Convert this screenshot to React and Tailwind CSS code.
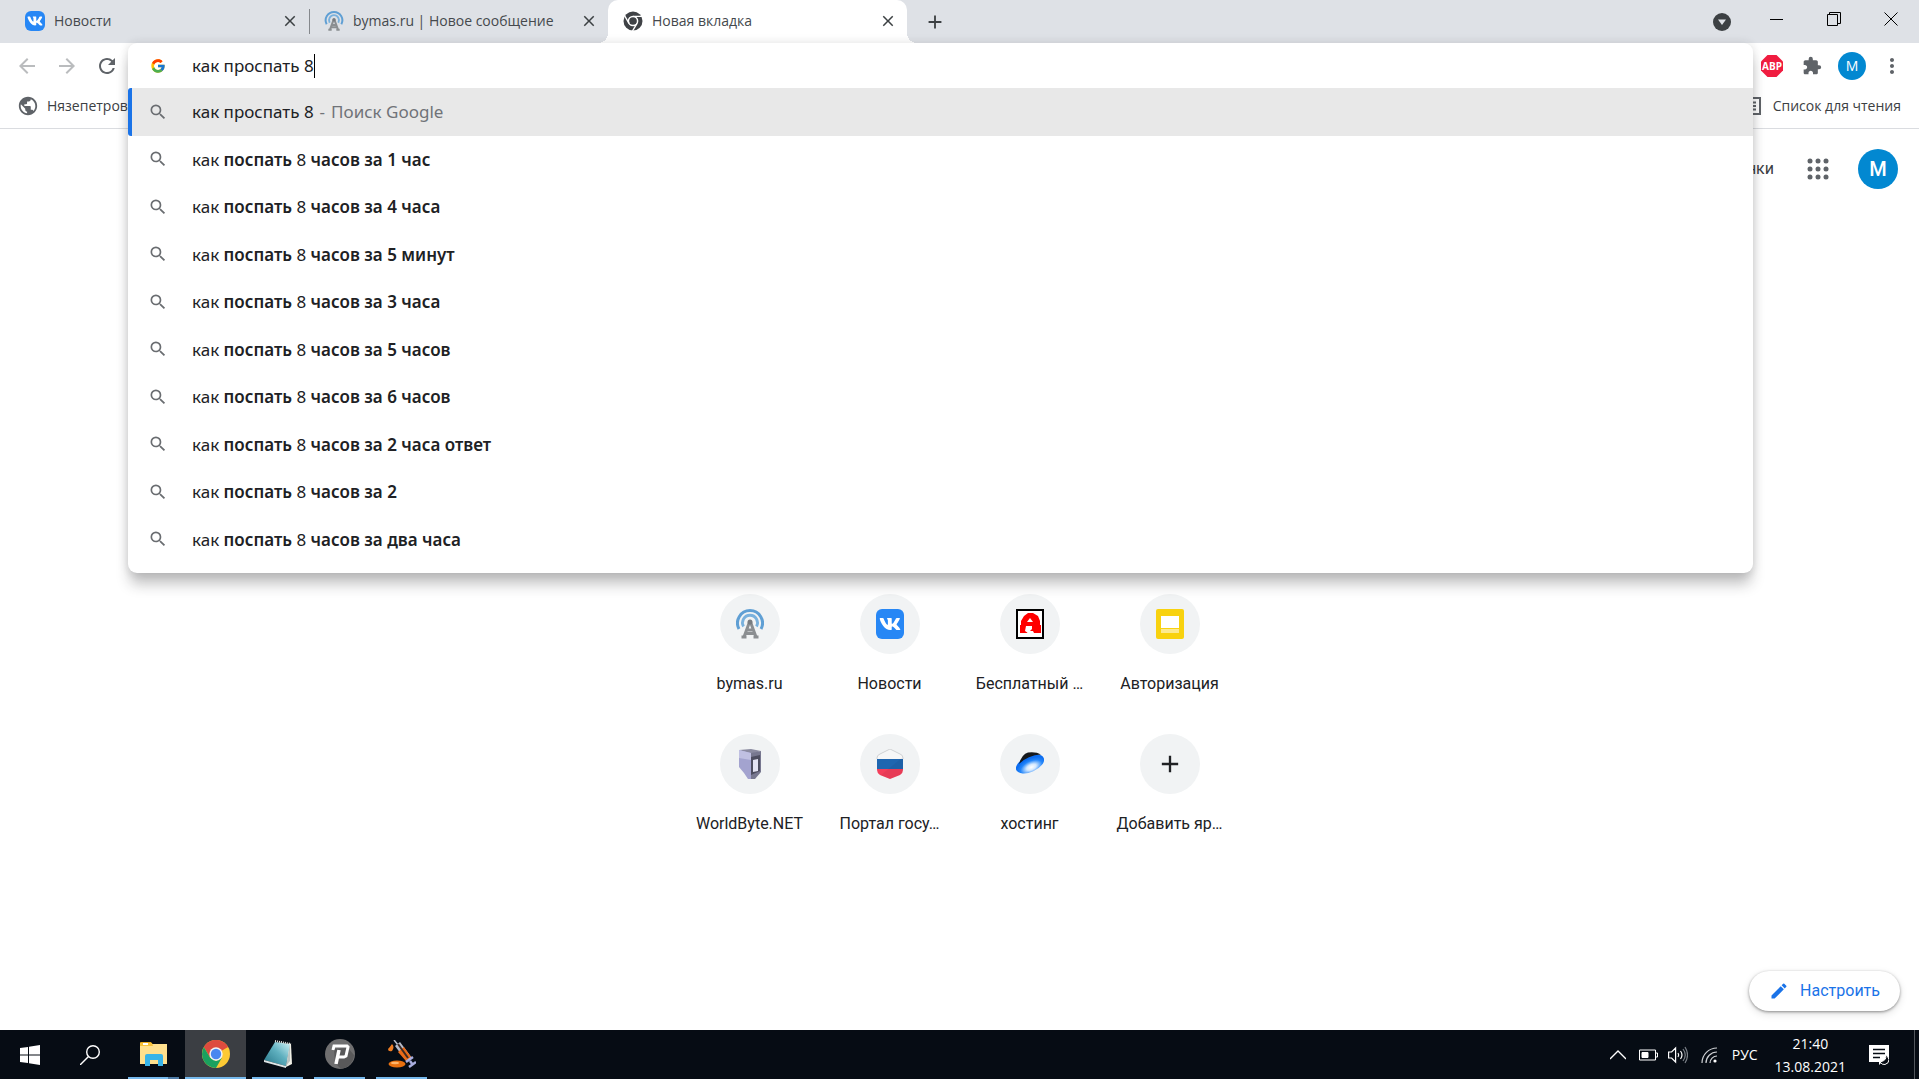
import { useState } from 'react'
import { FcGoogle } from 'react-icons/fc'
import { FaVk } from 'react-icons/fa'
import {
  MdAdd,
  MdArrowBack,
  MdArrowForward,
  MdClose,
  MdEdit,
  MdExtension,
  MdMoreVert,
  MdPublic,
  MdRefresh,
  MdSearch,
} from 'react-icons/md'

const suggestions = [
  'часов за 1 час',
  'часов за 4 часа',
  'часов за 5 минут',
  'часов за 3 часа',
  'часов за 5 часов',
  'часов за 6 часов',
  'часов за 2 часа ответ',
  'часов за 2',
  'часов за два часа',
]

/* ---------- Site icons ---------- */

const VkIcon = ({ className, glyph = 'size-4' }) => (
  <span className={`flex items-center justify-center rounded-md bg-[#2787f5] text-white ${className}`}>
    <FaVk className={glyph} />
  </span>
)

const AntennaIcon = ({ className }) => (
  <svg viewBox="0 0 28 30" className={className} fill="none">
    <path d="M3 20A12.500 12.500 0 1 1 25 20" stroke="#5f9fd4" strokeWidth="3" />
    <path d="M7.500 17.500A7.500 7.500 0 1 1 20.500 17.500" stroke="#79b1dd" strokeWidth="2.800" />
    <path d="M13.500 13L8 28M14.500 13L20 28M11 21h6M10 24.500h8" stroke="#8b8e91" strokeWidth="3" />
    <path d="M5.500 28h5M17.500 28h5" stroke="#8b8e91" strokeWidth="3" />
    <circle cx="14" cy="13" r="2.500" fill="#777b7f" />
  </svg>
)

const ChromeMono = ({ className }) => (
  <svg viewBox="0 0 20 20" className={className}>
    <circle cx="10" cy="10" r="9.500" fill="#3f4246" />
    <circle cx="10" cy="10" r="4.600" fill="none" stroke="#fff" strokeWidth="1.500" />
    <path d="M10 5.400h9M6 12.300L1.500 4.500M14 12.300L9.500 20" stroke="#fff" strokeWidth="1.400" />
  </svg>
)

const RedAIcon = () => (
  <svg viewBox="0 0 28 30" className="h-[30px] w-7">
    <rect x="1" y="1" width="26" height="28" fill="#fff" stroke="#000" strokeWidth="2" />
    <path
      d="M4 24V16h1v-4l3-5 4-3h5l5 3 2 5v4h1v8h-7l-1-2h-4l-2 2z"
      fill="#f00"
    />
    <path d="M14 9l3 4h-6zM10 17h6v3l-4 4-3-2z" fill="#fff" />
  </svg>
)

const YellowIcon = () => (
  <svg viewBox="0 0 28 30" className="h-[30px] w-7">
    <rect width="28" height="30" rx="2" fill="#f8d20f" />
    <rect x="5" y="7" width="18" height="12" fill="#fff" />
    <rect x="5" y="20" width="18" height="4" fill="#fcea90" />
  </svg>
)

const ServerIcon = () => (
  <svg viewBox="0 0 28 30" className="h-[30px] w-7">
    <path d="M3 1l12-1 10 2-10 3z" fill="#8a8aa0" />
    <path d="M3 1l12 3v26h-3L8 24l-5-6z" fill="#a3a3cf" />
    <path d="M3 1l12 3v7L3 9z" fill="#c0c0e2" />
    <path d="M15 4l10-2v21l-6 7h-4z" fill="#77778f" />
    <path d="M15 8l9-2v16l-9 4z" fill="#4d4d60" />
    <path d="M17 11l5-1v12l-5 1z" fill="#e3e3f3" />
  </svg>
)

const FlagIcon = () => (
  <svg viewBox="0 0 28 30" className="h-[30px] w-7">
    <defs>
      <clipPath id="flag">
        <path d="M14 0l10 5q3 1 3 4v12q0 3-3 5l-10 4-10-4q-3-2-3-5V9q0-3 3-4z" />
      </clipPath>
    </defs>
    <g clipPath="url(#flag)">
      <path d="M0 0h28v10H0z" fill="#f7f7f7" />
      <path d="M0 10h28v10H0z" fill="#1f66b0" />
      <path d="M0 20h28v10H0z" fill="#f43f5b" />
      <path d="M0 30L28 7v23z" fill="#000" opacity=".05" />
    </g>
    <path d="M1 10V9q0-3 3-4l10-5 10 5q3 1 3 4v1" fill="none" stroke="#d0d2d4" />
  </svg>
)

const UfoIcon = () => (
  <svg viewBox="0 0 28 30" className="h-[30px] w-7">
    <defs>
      <radialGradient id="ufo" cx=".5" cy=".72" r=".55">
        <stop offset="0" stopColor="#fff" />
        <stop offset=".3" stopColor="#d5e9ff" />
        <stop offset=".7" stopColor="#2386fa" />
        <stop offset="1" stopColor="#0b6cf0" />
      </radialGradient>
    </defs>
    <ellipse cx="14" cy="15" rx="15" ry="8" transform="rotate(-24 14 15)" fill="url(#ufo)" />
    <path d="M3 15Q6 5 12 3.500q8-1 13 2Q12 6 3 15z" fill="#15181c" />
  </svg>
)

const shortcuts = [
  { label: 'bymas.ru', icon: <AntennaIcon className="h-[30px] w-7" /> },
  { label: 'Новости', icon: <VkIcon className="h-[30px] w-7" glyph="size-[22px]" /> },
  { label: 'Бесплатный …', icon: <RedAIcon /> },
  { label: 'Авторизация', icon: <YellowIcon /> },
  { label: 'WorldByte.NET', icon: <ServerIcon /> },
  { label: 'Портал госу…', icon: <FlagIcon /> },
  { label: 'хостинг', icon: <UfoIcon /> },
  { label: 'Добавить яр…', icon: <MdAdd className="size-7 text-[#202124]" /> },
]

/* ---------- Tab strip ---------- */

const Tab = ({ title, icon, active, divider }) => (
  <div
    className={`relative flex w-[299px] items-center gap-[9px] pb-px pl-[15px] pr-[9px] ${
      active ? 'rounded-t-[10px] bg-white' : ''
    }`}
  >
    {active && (
      <>
        <span className="absolute bottom-0 right-full size-[10px] bg-[radial-gradient(circle_at_0_0,transparent_10px,#fff_10px)]" />
        <span className="absolute bottom-0 left-full size-[10px] bg-[radial-gradient(circle_at_100%_0,transparent_10px,#fff_10px)]" />
      </>
    )}
    {icon}
    <button role="tab" aria-selected={!!active} className="flex-1 truncate text-left text-sm text-[#45494d]">
      {title}
    </button>
    <button aria-label="Закрыть" className="flex size-5 items-center justify-center text-[#3c4043]">
      <MdClose className="size-[18px]" />
    </button>
    {divider && <span className="absolute -right-px top-[9px] h-[25px] w-px bg-[#85888c]" />}
  </div>
)

const TabStrip = () => (
  <header className="flex h-[43px] bg-[#dee1e6] pl-[10px]">
    <div role="tablist" className="flex">
      <Tab title="Новости" icon={<VkIcon className="size-5" />} divider />
      <Tab title="bymas.ru | Новое сообщение" icon={<AntennaIcon className="size-5" />} />
      <Tab title="Новая вкладка" icon={<ChromeMono className="size-5" />} active />
    </div>
    <button aria-label="Новая вкладка" className="ml-4 flex w-6 items-center justify-center text-[#3c4043]">
      <MdAdd className="size-[22px]" />
    </button>

    <button aria-label="Поиск вкладок" className="ml-auto mr-[17px] flex items-center">
      <svg viewBox="0 0 18 18" className="size-[18px]">
        <circle cx="9" cy="9" r="9" fill="#3c4043" />
        <path d="M5 6.500h8L9 12z" fill="#dee1e6" />
      </svg>
    </button>
    <div className="flex h-[37px] text-black">
      <button aria-label="Свернуть" className="flex w-[57px] items-center justify-center">
        <svg viewBox="0 0 14 14" className="size-[14px]" stroke="currentColor">
          <path d="M0 7.500h13" />
        </svg>
      </button>
      <button aria-label="Развернуть" className="flex w-[57px] items-center justify-center">
        <svg viewBox="0 0 14 14" className="size-[14px]" fill="none" stroke="currentColor">
          <path d="M.5 2.500h10v11H.5zM2.500 2.500v-2h11v11h-3" />
        </svg>
      </button>
      <button aria-label="Закрыть окно" className="flex w-[57px] items-center justify-center">
        <svg viewBox="0 0 14 14" className="size-[14px]" stroke="currentColor">
          <path d="M.5 .5l13 13M13.500 .5l-13 13" />
        </svg>
      </button>
    </div>
  </header>
)

/* ---------- Toolbar and bookmarks ---------- */

const ToolButton = ({ label, className = '', children }) => (
  <button aria-label={label} className={`flex w-10 items-center justify-center ${className}`}>
    {children}
  </button>
)

const Toolbar = () => (
  <nav className="flex h-[45px] items-center justify-between px-[7px] text-[#5f6368]">
    <div className="flex">
      <ToolButton label="Назад" className="text-[#babcbe]">
        <MdArrowBack className="size-6" />
      </ToolButton>
      <ToolButton label="Вперёд" className="text-[#babcbe]">
        <MdArrowForward className="size-6" />
      </ToolButton>
      <ToolButton label="Обновить">
        <MdRefresh className="size-6" />
      </ToolButton>
    </div>
    <div className="flex items-center">
      <ToolButton label="Adblock Plus">
        <svg viewBox="0 0 22 22" className="size-[22px]">
          <path d="M6.500 0h9L22 6.500v9L15.500 22h-9L0 15.500v-9z" fill="#f01c40" />
          <text
            x="11"
            y="15"
            textAnchor="middle"
            fontSize="10"
            fontWeight="700"
            fill="#fff"
            fontFamily="Open Sans, sans-serif"
          >
            ABP
          </text>
        </svg>
      </ToolButton>
      <ToolButton label="Расширения">
        <MdExtension className="size-5" />
      </ToolButton>
      <ToolButton label="Профиль">
        <span className="flex size-7 items-center justify-center rounded-full bg-[#0288d1] text-sm text-white">
          M
        </span>
      </ToolButton>
      <ToolButton label="Меню">
        <MdMoreVert className="size-6" />
      </ToolButton>
    </div>
  </nav>
)

const BookmarksBar = () => (
  <div className="flex h-[41px] items-center justify-between border-b border-[#dadce0] pb-1 pl-[17px] pr-[18px] text-sm text-[#3c4043]">
    <a href="#bookmark" className="flex items-center gap-2">
      <MdPublic className="size-[22px] text-[#5f6368]" />
      Нязепетровск
    </a>
    <a href="#reading" className="flex items-center gap-3">
      <svg viewBox="0 0 18 18" className="size-[18px]" fill="none" stroke="#5f6368" strokeWidth="2">
        <path d="M1 1h16v16H1zM4 5.500h9M4 9h9M4 12.500h9" />
      </svg>
      Список для чтения
    </a>
  </div>
)

/* ---------- Address bar with suggestions ---------- */

const Omnibox = () => {
  const [query, setQuery] = useState('как проспать 8')

  return (
    <div className="absolute left-[128px] right-[166px] top-[43px] z-10 rounded-[9px] bg-white pb-[10px] font-['Noto_Sans',sans-serif] text-[17px] text-[#202124] shadow-[0_13px_14px_-2px_rgba(32,33,36,0.28),0_0_10px_rgba(32,33,36,0.14)]">
      <label className="flex h-[45px] items-center pl-[22px]">
        <FcGoogle className="mr-[26px] size-4" />
        <input
          aria-label="Адресная строка"
          value={query}
          onChange={(e) => setQuery(e.target.value)}
          className="[field-sizing:content] outline-none"
        />
        <span className="h-6 w-px bg-black" />
      </label>
      <ul className="flex h-[475px] flex-col">
        <li className="flex flex-1">
          <button className="flex flex-1 items-center rounded-l-[3px] border-l-4 border-[#1a73e8] bg-[#e8e8e8] pl-4 text-left">
            <MdSearch className="mr-6 size-5 text-[#6a6d71]" />
            как проспать 8
            <span className="mx-[6px] text-[#707378]">-</span>
            <span className="text-[#707378]">Поиск Google</span>
          </button>
        </li>
        {suggestions.map((s) => (
          <li key={s} className="flex flex-1">
            <button className="flex flex-1 items-center pl-5 text-left">
              <MdSearch className="mr-6 size-5 text-[#6a6d71]" />
              <span>
                как <b className="font-semibold">поспать</b> 8 <b className="font-semibold">{s}</b>
              </span>
            </button>
          </li>
        ))}
      </ul>
    </div>
  )
}

/* ---------- New tab page ---------- */

const dots = [4, 12, 20]

const NewTabPage = () => (
  <main className="flex flex-1 flex-col font-[Roboto,sans-serif]">
    <div className="flex items-center justify-end pr-[21px] pt-5">
      <a href="#images" className="mr-8 text-base text-[#3c4043]">
        Картинки
      </a>
      <button aria-label="Приложения Google" className="mr-7">
        <svg viewBox="0 0 24 24" className="size-6" fill="#5f6368">
          {dots.map((y) => dots.map((x) => <circle key={`${x}-${y}`} cx={x} cy={y} r="2.500" />))}
        </svg>
      </button>
      <button className="size-10 rounded-full bg-[#0288d1] text-xl font-medium text-white">M</button>
    </div>

    <div className="mx-auto mt-[405px] grid grid-cols-4 gap-y-10">
      {shortcuts.map((item) => (
        <a key={item.label} href="#shortcut" className="flex w-[140px] flex-col items-center gap-5">
          <span className="flex size-[60px] items-center justify-center rounded-full bg-[#f1f3f4]">
            {item.icon}
          </span>
          <span className="text-base leading-5 text-[#202124]">{item.label}</span>
        </a>
      ))}
    </div>

    <button className="mb-[19px] mr-[19px] mt-auto flex h-10 items-center gap-[11px] self-end rounded-full bg-white px-5 text-base text-[#1a73e8] shadow-[0_1px_3px_rgba(0,0,0,0.4),0_3px_8px_rgba(0,0,0,0.12)]">
      <MdEdit className="size-5" />
      Настроить
    </button>
  </main>
)

/* ---------- Windows taskbar ---------- */

const ExplorerIcon = () => (
  <svg viewBox="0 0 28 24" className="h-6 w-7">
    <path d="M0 1q0-1 1-1h10l2 3h-13z" fill="#e8a91c" />
    <path d="M1 2h26v20H0V4z" fill="#ffe08d" />
    <path d="M0 1h12l1 3H0z" fill="#f7c23a" />
    <path d="M3 1h5v2H3z" fill="#fff" />
    <path d="M5 24V14q0-2 2-2h14q2 0 2 2v10h-5v-6h-8v6z" fill="#38b4e8" />
  </svg>
)

const ChromeIcon = () => (
  <svg viewBox="0 0 28 28" className="size-7">
    <circle cx="14" cy="14" r="14" fill="#fcc934" />
    <path d="M14 14L1.880 7A14 14 0 0 1 26.120 7z" fill="#dd4b3e" />
    <path d="M14 7h12.120A14 14 0 0 0 1.880 7L8 17.500z" fill="#dd4b3e" />
    <path d="M1.880 7A14 14 0 0 0 14 28l6-10.500-6 3.500-6-3.500z" fill="#1aa15f" />
    <circle cx="14" cy="14" r="6.700" fill="#f2f2f2" />
    <circle cx="14" cy="14" r="5.200" fill="#4a87f0" />
  </svg>
)

const NotepadIcon = () => (
  <svg viewBox="0 0 28 28" className="size-7">
    <defs>
      <linearGradient id="note" x1="1" y1="0" x2="0" y2="1">
        <stop offset="0" stopColor="#d0f2f6" />
        <stop offset=".45" stopColor="#5fb0bf" />
        <stop offset="1" stopColor="#247487" />
      </linearGradient>
    </defs>
    <path d="M25 3l2 1 1 20-6 3z" fill="#f0f0e6" />
    <path d="M11 2l15 2-4 22L0 20z" fill="url(#note)" />
    <path d="M26 4l-4 22 4-5z" fill="#b9c4c2" />
    <path d="M0 20l22 6v2L0 22z" fill="#dfe6e6" />
    <path d="M11 1l16 3" stroke="#e7e7e0" strokeWidth="2" strokeDasharray="1 1" />
  </svg>
)

const PsiphonIcon = () => (
  <svg viewBox="0 0 30 30" className="size-[30px]">
    <circle cx="15" cy="15" r="15" fill="#6f6f70" />
    <path d="M9 10l14-1 6 7a15 15 0 0 1-13 14l-6-6z" fill="#59595a" />
    <path d="M8 11l1-4h13l1 1-2 9-2 1h-6" fill="none" stroke="#fff" strokeWidth="3" />
    <path d="M14 11L11 25" stroke="#fff" strokeWidth="3.500" />
  </svg>
)

const SyringeIcon = () => (
  <svg viewBox="0 0 28 28" className="size-7">
    <ellipse cx="9" cy="24" rx="8.500" ry="3.500" fill="#e8700f" />
    <ellipse cx="7" cy="23" rx="4" ry="1.200" fill="#ffb569" />
    <path d="M4 4q3 3 0 7-4 1-4-2 2-2 4-5z" fill="#ef7d22" />
    <path d="M6 0l4 5" stroke="#b9bcc8" strokeWidth="1.500" />
    <path d="M7 6l5-4 12 16-5 4z" fill="#b7bccb" />
    <path d="M10 12l6-5 7 10-5 4z" fill="#ec6b17" />
    <path d="M10 4l10 14" stroke="#3d2a22" strokeWidth="2" />
    <path d="M18 22l7-5M22 21l3 4M21 27l7-5" stroke="#a9aede" strokeWidth="2.500" />
  </svg>
)

const apps = [
  { name: 'Проводник', icon: <ExplorerIcon />, split: true },
  { name: 'Google Chrome', icon: <ChromeIcon />, active: true },
  { name: 'Блокнот', icon: <NotepadIcon /> },
  { name: 'Psiphon', icon: <PsiphonIcon /> },
  { name: 'Программа', icon: <SyringeIcon /> },
]

const Taskbar = () => (
  <footer className="flex h-[49px] bg-[#060c14] text-sm text-white">
    <button aria-label="Пуск" className="flex w-[60px] items-center justify-center">
      <svg viewBox="0 0 20 20" className="size-5" fill="#fff">
        <path d="M0 3l8-1v7.500H0zM9 1.800L20 0v9.500H9zM0 10.500h8V18l-8-1zM9 10.500h11V20L9 18.200z" />
      </svg>
    </button>
    <button aria-label="Поиск" className="flex w-[60px] items-center justify-center">
      <svg viewBox="0 0 20 20" className="size-5" fill="none" stroke="#fff" strokeWidth="1.400">
        <circle cx="13" cy="7" r="6.300" />
        <path d="M8.500 11.500L0 20" />
      </svg>
    </button>
    <div className="ml-[3px] flex gap-px">
      {apps.map((app) => (
        <button
          key={app.name}
          aria-label={app.name}
          className={`flex w-[61px] flex-col items-center ${app.active ? 'bg-[#3b3e43]' : ''}`}
        >
          <span className="flex flex-1 items-center">{app.icon}</span>
          <span className={`flex h-[2px] justify-end bg-[#76b9ed] ${app.active ? 'w-full' : 'w-[51px]'}`}>
            {app.split && <span className="w-[11px] bg-[#4d7ba6]" />}
          </span>
        </button>
      ))}
    </div>

    <div className="ml-auto flex items-center">
      <button aria-label="Скрытые значки" className="mr-[13px]">
        <svg viewBox="0 0 16 10" className="h-[10px] w-4" fill="none" stroke="#fff" strokeWidth="1.300">
          <path d="M0 9l8-8 8 8" />
        </svg>
      </button>
      <svg viewBox="0 0 19 12" className="mr-[10px] h-3 w-[19px]" fill="none" stroke="#fff">
        <path d="M.5 1h16v10H.5zM17 4h1.500v4H17" />
        <path d="M3 3.500h6v5H3z" fill="#fff" />
      </svg>
      <svg viewBox="0 0 20 18" className="mr-[13px] h-[18px] w-5" fill="none" stroke="#fff" strokeWidth="1.200">
        <path d="M.6 6h3l4-4v14l-4-4h-3zM10 7q1.500 2 0 4M12.500 5q3 4 0 8" />
        <path d="M15 3q4.500 6 0 12M17 1q5 8 0 16" stroke="#7b8087" />
      </svg>
      <svg viewBox="0 0 16 16" className="mr-[15px] size-4" fill="none" stroke="#cfd2d5" strokeWidth="1.200">
        <path d="M1 16A15 15 0 0 1 16 1M5 16A11 11 0 0 1 16 5M9 16a7 7 0 0 1 7-7" />
        <circle cx="14" cy="14" r="1.600" fill="#fff" stroke="none" />
      </svg>
      <button className="mr-[17px]">РУС</button>
      <button className="flex flex-col items-center leading-[23px]">
        <span>21:40</span>
        <span>13.08.2021</span>
      </button>
      <button aria-label="Уведомления" className="ml-[23px]">
        <svg viewBox="0 0 20 20" className="size-5">
          <path d="M0 0h20v17h-7l-3 3v-3H0z" fill="#fff" />
          <path d="M4 4.500h12M4 8.500h12M4 12.500h7" stroke="#060c14" strokeWidth="1.500" />
          <path d="M16 10q3 5-5 7 2 3 5 2.500 4-1 4-5-1-4-4-4.500z" fill="#060c14" stroke="#fff" />
        </svg>
      </button>
      <span className="ml-[25px] mr-1 h-[49px] w-px bg-[#52575d]" />
    </div>
  </footer>
)

const App = () => (
  <div className="relative flex min-h-screen flex-col bg-white font-['Open_Sans',sans-serif]">
    <TabStrip />
    <Toolbar />
    <BookmarksBar />
    <Omnibox />
    <NewTabPage />
    <Taskbar />
  </div>
)

export default App
